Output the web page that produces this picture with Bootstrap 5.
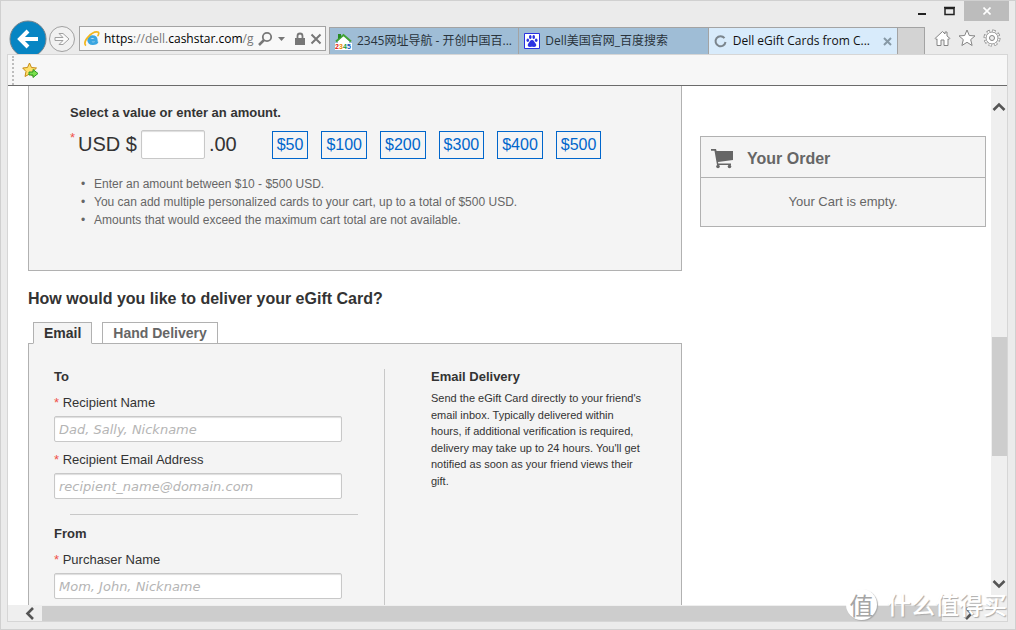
<!DOCTYPE html>
<html lang="en">
<head>
<meta charset="utf-8">
<meta name="viewport" content="width=device-width, initial-scale=1">
<title>Dell eGift Cards from CashStar</title>
<link href="https://cdn.jsdelivr.net/npm/bootstrap@5.3.0/dist/css/bootstrap.min.css" rel="stylesheet">
<style>
  body { font-family: "Liberation Sans", Arial, sans-serif; font-size: 13px; line-height: 16px; color: #333; background: #ebebeb; }
  button { padding: 0; border: 0; background: none; line-height: 1; color: inherit; }
  svg { display: block; }
  .browser { height: 100vh; border: 1px solid #d0d0d0; }

  /* browser chrome */
  .chrome-text { font-family: "Open Sans", "Noto Sans CJK SC", sans-serif; font-size: 12px; line-height: 16px; color: #111; }
  .title-row { height: 19px; padding-right: 6px; }
  .win-close { width: 45px; height: 20px; background: #bcbcbc; }
  .nav-row { height: 34px; padding-left: 7px; overflow: hidden; }
  .address { flex: 238 1 0; min-width: 0; height: 25px; border: 1px solid #a3a3a3; background: #f8f8f8; margin: 0 3px 3px 0; padding: 0 3px 0 4px; color: #777; }
  .url { flex: 1 1 0; min-width: 0; color: #777; white-space: nowrap; overflow: hidden; }
  .url b { font-weight: 400; color: #000; }
  .tabs { flex: 594 1 0; min-width: 0; height: 27px; border: 1px solid #a3a3a3; border-bottom: 0; background: #d3d3d3; }
  .page-tab { flex: 184 1 0; min-width: 0; background: #9fbdd6; border-right: 1px solid #a3a3a3; padding-left: 5px; gap: 5px; white-space: nowrap; overflow: hidden; color: #29333b; }
  .page-tab svg { flex: none; }
  .page-tab.current { background: #d8ebfb; color: #111; gap: 6px; }
  .new-tab { flex: 26 1 0; }
  .tools { width: 90px; flex: none; padding-left: 9px; gap: 7px; height: 32px; }
  .frame { margin: 0 7px 7px 6px; border: 1px solid #d6d6d6; min-height: 0; }
  .fav-bar { height: 31px; flex: none; background: #f7f7f7; border-bottom: 1px solid #6b6b6b; padding-left: 4px; gap: 8px; }
  .grip { height: 29px; border-left: 2px dotted #bdbdbd; }

  /* scroll bars */
  .vbar { width: 16px; flex: none; background: #efefef; padding: 16px 0; }
  .hbar { height: 16px; flex: none; background: #efefef; padding: 0 32px 0 16px; gap: 7px; }
  .thumb { background: #cdcdcd; }
  .vbar .thumb { margin-left: 1px; }
  .hbar .thumb { height: 15px; }

  /* gift card page */
  .site { background: #fff; padding: 0 5px 0 20px; gap: 18px; overflow: hidden; min-height: 0; }
  .panel { background: #f4f4f4; border: 1px solid #b1b1b1; }
  .main-col { flex: 1 1 0; min-width: 0; }
  .side-col { width: 286px; flex: none; padding-top: 50px; }
  .value-panel { border-top: 0; height: 185px; padding: 19px 41px 0; }
  .star { color: #f0524b; }
  .amount-row { gap: 35px; margin-top: 9px; }
  .sum { font-size: 20px; line-height: 29px; }
  .sum .star { font-size: 13px; line-height: 16px; width: 8px; }
  .field { display: block; width: 100%; height: 26px; background: #fff; border: 1px solid #c8c8c8; border-radius: 2px; box-shadow: inset 0 1px 1px #ddd; padding: 0 4px; font: 13px "DejaVu Sans", Verdana, sans-serif; }
  .field::placeholder { font-style: italic; color: #b5b5b5; opacity: 1; }
  .sum .field { width: 64px; height: 29px; margin: 0 4px; }
  .prices { gap: 13px; padding-top: 1px; }
  .price { border: 1px solid #0066cc; color: #0066cc; font-size: 16px; line-height: 26px; padding: 0 4px; background: #f4f4f4; }
  .notes { font-size: 12px; line-height: 18px; color: #666; margin: 16px 0 0; padding-left: 24px; list-style: none; }
  .notes li::before { content: "•"; float: left; margin-left: -13px; }
  h2 { font-size: 16px; line-height: 20px; font-weight: 700; margin: 18px 0 13px; }
  h3 { font-size: 13px; line-height: 16px; font-weight: 700; margin: 0; }
  .delivery-tabs { gap: 10px; padding-left: 5px; margin-bottom: -1px; position: relative; border: 0; }
  .delivery-tabs .nav-link { border: 1px solid #b1b1b1; border-radius: 0; margin: 0; font-size: 14px; line-height: 20px; font-weight: 700; color: #666; padding: 0 10px; background: #fff; }
  .delivery-tabs .nav-link.active { border-color: #b1b1b1; background: #f4f4f4; color: #333; border-bottom-color: #f4f4f4; }
  .deliver { display: grid; grid-template-columns: 331fr 296fr; padding: 25px 0 0 25px; }
  .form-col { border-right: 1px solid #c8c8c8; padding-right: 26px; padding-bottom: 60px; }
  .row-field { padding-right: 16px; margin-top: 9px; }
  .row-field label { display: block; line-height: 18px; margin-bottom: 4px; }
  .rule { height: 1px; background: #c8c8c8; margin: 15px 0 11px 16px; }
  .info-col { padding: 0 36px 0 46px; }
  .info-col p { font-size: 11px; line-height: 1.5; margin: 5px 0 0; }
  .order-head { height: 41px; border-bottom: 1px solid #b1b1b1; padding: 4px 0 0 10px; gap: 13px; font-size: 16px; font-weight: 700; color: #666; }
  .order-body { height: 48px; color: #666; }

  /* site stamp over the corner */
  .stamp { position: absolute; right: 8px; bottom: 9px; gap: 10px; color: #fff; font: 500 24px/30px "Noto Sans CJK SC", sans-serif; text-shadow: 1px 1px 1px #aaa; pointer-events: none; }
  .stamp-disc { width: 31px; height: 31px; border-radius: 50%; background: #fff; color: #a5a5a5; text-shadow: none; box-shadow: 1px 1px 1px #aaa; font-weight: 400; }
</style>
</head>
<body>
<div class="browser d-flex flex-column position-relative">
  <div class="title-row d-flex justify-content-end flex-shrink-0">
    <button aria-label="Minimize" class="me-3"><svg width="12" height="20"><path d="M2 12h8v2H2z" fill="#222"/></svg></button>
    <button aria-label="Maximize" class="me-2"><svg width="12" height="20"><path d="M1 7.5h9v6H1zM0 6.500h11" fill="none" stroke="#222" stroke-width="1.500"/></svg></button>
    <button aria-label="Close" class="win-close d-flex align-items-center justify-content-center"><svg width="8" height="8"><path d="M.5.5l7 7m0-7l-7 7" stroke="#fff" stroke-width="1.600"/></svg></button>
  </div>

  <div class="nav-row chrome-text d-flex align-items-end flex-shrink-0">
    <button aria-label="Back" class="align-self-start"><svg width="40" height="38" viewBox="0 0 40 38"><circle cx="20" cy="19" r="18" fill="#0785c3" stroke="#77848c"/><path d="M30 19H13M20 11l-8 8 8 8" fill="none" stroke="#fff" stroke-width="4"/></svg></button>
    <button aria-label="Forward" class="align-self-start mt-1 me-1"><svg width="27" height="30" viewBox="0 0 27 30"><circle cx="14" cy="15" r="12.500" fill="#f1f1f1" stroke="#a0a0a0"/><path d="M7 13.500h8l-4-4h4l6 5.500-6 5.500h-4l4-4H7z" fill="#fafafa" stroke="#a0a0a0"/></svg></button>
    <div class="address d-flex align-items-center">
      <svg class="flex-shrink-0 me-1" width="16" height="18" viewBox="0 0 17 18"><path d="M14 11.500c-1 3-8.500 4-9-1.200 0-5 7.800-5 8 .2H6" fill="none" stroke="#3aa5e0" stroke-width="3"/><path d="M2 16C-2 12 8 1 14 1.500c3 0 1 4 .3 4.500" fill="none" stroke="#f2b71f" stroke-width="1.800"/></svg>
      <span class="url" role="textbox" aria-label="Address"><b>https</b>://dell.<b>cashstar.com</b>/g</span>
      <button aria-label="Search" class="ms-1"><svg width="15" height="16"><circle cx="9" cy="6" r="4.200" fill="none" stroke="#777" stroke-width="1.800"/><path d="M6 9l-5 5" stroke="#777" stroke-width="2.500"/></svg></button>
      <button aria-label="Search options" class="ms-1"><svg width="9" height="6"><path d="M1 1h7L4.500 5z" fill="#777"/></svg></button>
      <svg class="ms-2 me-1 flex-shrink-0" width="12" height="14"><path d="M1 6h10v7H1z" fill="#777"/><path d="M3.500 7V4a2.500 2.500 0 015 0v3" fill="none" stroke="#777" stroke-width="1.800"/></svg>
      <button aria-label="Stop"><svg width="12" height="12"><path d="M1.500 1.500l9 9m0-9l-9 9" stroke="#777" stroke-width="2"/></svg></button>
    </div>
    <div class="tabs d-flex" role="tablist">
      <div class="page-tab d-flex align-items-center" role="tab">
        <svg width="17" height="17" viewBox="0 0 17 17"><path d="M3 8l5.500-6L14 8v8H3z" fill="#fff"/><path d="M1 8.500L8.500 2 16 8.500" fill="none" stroke="#42a336" stroke-width="2"/><path d="M3 1h3v3L3 6z" fill="#278b22"/><path d="M0 10h17v7H0z" fill="#fff"/><g font-size="7" font-weight="700" font-family="Liberation Sans"><text x="0" y="16" fill="#d11">2</text><text x="4" y="16" fill="#e80">3</text><text x="8" y="16" fill="#293">4</text><text x="12" y="16" fill="#15b">5</text></g></svg>
        <span>2345网址导航 - 开创中国百...</span>
      </div>
      <div class="page-tab d-flex align-items-center" role="tab">
        <svg width="16" height="16"><path d="M.5.5h15v15H.5z" fill="#fff" stroke="#2932e1"/><g fill="#2932e1"><ellipse cx="3.800" cy="7.300" rx="1.300" ry="1.800"/><ellipse cx="6.300" cy="4" rx="1.300" ry="1.900"/><ellipse cx="9.700" cy="4" rx="1.300" ry="1.900"/><ellipse cx="12.200" cy="7.300" rx="1.300" ry="1.800"/><path d="M8 7c2 0 2.200 2 4 4 1 2-.6 3-2 3-1.500-.5-2.500-.5-4 0-1.400 0-3-1-2-3C5.800 9 6 7 8 7z"/></g></svg>
        <span>Dell美国官网_百度搜索</span>
      </div>
      <div class="page-tab current d-flex align-items-center" role="tab">
        <svg width="13" height="13"><path d="M10.500 3.200A5 5 0 1011.500 7" fill="none" stroke="#7b858d" stroke-width="2"/></svg>
        <span>Dell eGift Cards from C...</span>
        <button aria-label="Close tab" class="ms-auto me-1"><svg width="10" height="9"><path d="M1 1l7 7m0-7L1 8" stroke="#8799a6" stroke-width="2"/></svg></button>
      </div>
      <button class="new-tab" aria-label="New tab"></button>
    </div>
    <div class="tools d-flex align-items-center">
      <button aria-label="Home"><svg width="17" height="17"><path d="M1 8.500L8.500 1.500 11 4V2h2v4l3 2.500-1 1-1-.7V15.500H10V10H7v5.500H3V8.800l-1 .7z" fill="#fff" stroke="#858585"/></svg></button>
      <button aria-label="Favorites"><svg width="18" height="18"><path d="M9 1l2.300 5.500 5.700.4-4.300 3.700 1.400 5.900L9 13.300l-5.100 3.200 1.400-5.900L1 6.900l5.700-.4z" fill="#fff" stroke="#858585"/></svg></button>
      <button aria-label="Settings"><svg width="18" height="18"><circle cx="9" cy="9" r="7" fill="none" stroke="#858585" stroke-width="3" stroke-dasharray="3.200 2.298"/><circle cx="9" cy="9" r="6" fill="#fff" stroke="#999"/><circle cx="9" cy="9" r="7" fill="none" stroke="#fff" stroke-width="1.500" stroke-dasharray="2.200 3.298" stroke-dashoffset="-.5"/><circle cx="9" cy="9" r="2.500" fill="#eee" stroke="#858585"/></svg></button>
    </div>
  </div>

  <div class="frame flex-fill d-flex flex-column">
    <div class="fav-bar d-flex align-items-center">
      <span class="grip"></span>
      <button aria-label="Add to favorites bar"><svg width="17" height="17" viewBox="0 0 17 17"><path d="M7.500 1l2 4.500 5 .5-3.700 3.500 1 5-4.300-2.500-4.500 2.500 1-5L.7 6l4.800-.5z" fill="#ffe06a" stroke="#c58a14"/><path d="M7 10h4V7.500l5 4-5 4V13H7z" fill="#7be04c" stroke="#2d9a28"/></svg></button>
    </div>
    <div class="d-flex flex-fill overflow-hidden">
      <div class="site d-flex flex-fill">
        <main class="main-col">
          <section class="panel value-panel">
            <h3>Select a value or enter an amount.</h3>
            <div class="amount-row d-flex align-items-start">
              <div class="sum d-flex">
                <span class="star">*</span><label for="amount">USD $</label>
                <input id="amount" class="field" type="text"><span>.00</span>
              </div>
              <div class="prices d-flex">
                <button class="price">$50</button><button class="price">$100</button><button class="price">$200</button><button class="price">$300</button><button class="price">$400</button><button class="price">$500</button>
              </div>
            </div>
            <ul class="notes">
              <li>Enter an amount between $10 - $500 USD.</li>
              <li>You can add multiple personalized cards to your cart, up to a total of $500 USD.</li>
              <li>Amounts that would exceed the maximum cart total are not available.</li>
            </ul>
          </section>
          <h2>How would you like to deliver your eGift Card?</h2>
          <nav class="nav nav-tabs delivery-tabs">
            <a class="nav-link active" href="#email">Email</a>
            <a class="nav-link" href="#hand">Hand Delivery</a>
          </nav>
          <section class="panel deliver" id="email">
            <form class="form-col">
              <h3>To</h3>
              <div class="row-field"><label for="rname"><span class="star">*</span> Recipient Name</label><input id="rname" class="field" type="text" placeholder="Dad, Sally, Nickname"></div>
              <div class="row-field"><label for="rmail"><span class="star">*</span> Recipient Email Address</label><input id="rmail" class="field" type="email" placeholder="recipient_name@domain.com"></div>
              <div class="rule"></div>
              <h3>From</h3>
              <div class="row-field"><label for="pname"><span class="star">*</span> Purchaser Name</label><input id="pname" class="field" type="text" placeholder="Mom, John, Nickname"></div>
            </form>
            <div class="info-col">
              <h3>Email Delivery</h3>
              <p>Send the eGift Card directly to your friend's email inbox. Typically delivered within hours, if additional verification is required, delivery may take up to 24 hours. You'll get notified as soon as your friend views their gift.</p>
            </div>
          </section>
        </main>
        <aside class="side-col">
          <section class="panel">
            <div class="order-head d-flex align-items-center">
              <svg width="23" height="20" viewBox="0 0 23 20"><path d="M0 0h5l.6 2H22v9L7 13l.3 1.500H20V16H6L3.500 1.700H0z" fill="#666"/><circle cx="7" cy="17.500" r="1.800" fill="#666"/><circle cx="18.500" cy="17.500" r="1.800" fill="#666"/></svg>
              <span>Your Order</span>
            </div>
            <div class="order-body d-flex align-items-center justify-content-center">Your Cart is empty.</div>
          </section>
        </aside>
      </div>
      <div class="vbar d-flex flex-column">
        <button aria-label="Scroll up"><svg width="16" height="10"><path d="M2.500 8L8 2.500 13.500 8" fill="none" stroke="#555" stroke-width="2.600"/></svg></button>
        <div style="flex-grow:225"></div><div class="thumb" style="flex-grow:118"></div><div style="flex-grow:123"></div>
        <button aria-label="Scroll down"><svg width="16" height="10"><path d="M2.500 2L8 7.500 13.500 2" fill="none" stroke="#555" stroke-width="2.600"/></svg></button>
      </div>
    </div>
    <div class="hbar d-flex align-items-center">
      <button aria-label="Scroll left"><svg width="11" height="13"><path d="M9 1L3.500 6.500 9 12" fill="none" stroke="#555" stroke-width="2.600"/></svg></button>
      <div class="thumb" style="flex-grow:899"></div><div style="flex-grow:8"></div>
      <button aria-label="Scroll right"><svg width="11" height="13"><path d="M2 1l5.500 5.500L2 12" fill="none" stroke="#555" stroke-width="2.600"/></svg></button>
    </div>
  </div>

  <div class="stamp d-flex"><span class="stamp-disc d-flex align-items-center justify-content-center">值</span><span>什么值得买</span></div>
</div>
<script src="https://cdn.jsdelivr.net/npm/bootstrap@5.3.0/dist/js/bootstrap.bundle.min.js"></script>
</body>
</html>
